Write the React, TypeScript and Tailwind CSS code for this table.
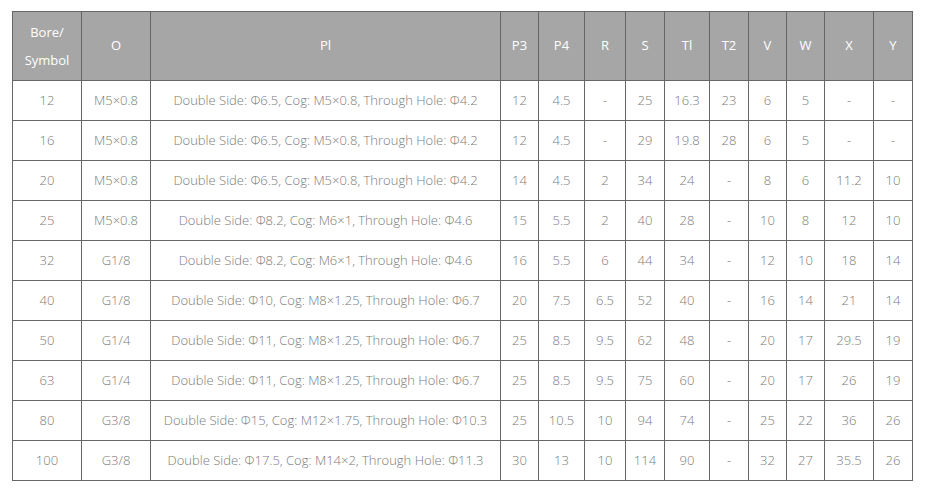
import React from "react";

const headers = ["O", "Pl", "P3", "P4", "R", "S", "Tl", "T2", "V", "W", "X", "Y"];
const widths = [69, 69, 350, 38, 46, 41, 39, 45, 39, 38, 38, 49, 39];

const rows: string[][] = [
  ["12", "M5×0.8", "Double Side: Φ6.5, Cog: M5×0.8, Through Hole: Φ4.2", "12", "4.5", "-", "25", "16.3", "23", "6", "5", "-", "-"],
  ["16", "M5×0.8", "Double Side: Φ6.5, Cog: M5×0.8, Through Hole: Φ4.2", "12", "4.5", "-", "29", "19.8", "28", "6", "5", "-", "-"],
  ["20", "M5×0.8", "Double Side: Φ6.5, Cog: M5×0.8, Through Hole: Φ4.2", "14", "4.5", "2", "34", "24", "-", "8", "6", "11.2", "10"],
  ["25", "M5×0.8", "Double Side: Φ8.2, Cog: M6×1, Through Hole: Φ4.6", "15", "5.5", "2", "40", "28", "-", "10", "8", "12", "10"],
  ["32", "G1/8", "Double Side: Φ8.2, Cog: M6×1, Through Hole: Φ4.6", "16", "5.5", "6", "44", "34", "-", "12", "10", "18", "14"],
  ["40", "G1/8", "Double Side: Φ10, Cog: M8×1.25, Through Hole: Φ6.7", "20", "7.5", "6.5", "52", "40", "-", "16", "14", "21", "14"],
  ["50", "G1/4", "Double Side: Φ11, Cog: M8×1.25, Through Hole: Φ6.7", "25", "8.5", "9.5", "62", "48", "-", "20", "17", "29.5", "19"],
  ["63", "G1/4", "Double Side: Φ11, Cog: M8×1.25, Through Hole: Φ6.7", "25", "8.5", "9.5", "75", "60", "-", "20", "17", "26", "19"],
  ["80", "G3/8", "Double Side: Φ15, Cog: M12×1.75, Through Hole: Φ10.3", "25", "10.5", "10", "94", "74", "-", "25", "22", "36", "26"],
  ["100", "G3/8", "Double Side: Φ17.5, Cog: M14×2, Through Hole: Φ11.3", "30", "13", "10", "114", "90", "-", "32", "27", "35.5", "26"],
];

export default function App() {
  return (
    <div className="w-[925px] h-[492px] bg-white pt-[11px] pl-[12px] font-['Open_Sans',sans-serif]">
      <table className="table-fixed border-collapse w-[900px] text-[13px] font-light text-[#7a7a7a] text-center">
        <colgroup>
          {widths.map((w, i) => (
            <col key={i} style={{ width: w }} />
          ))}
        </colgroup>
        <thead>
          <tr className="h-[69px] bg-[#a6a6a6] text-white">
            <th className="border border-[#666] font-normal leading-[28px]">
              Bore/
              <br />
              Symbol
            </th>
            {headers.map((h) => (
              <th key={h} className="border border-[#666] font-normal">
                {h}
              </th>
            ))}
          </tr>
        </thead>
        <tbody>
          {rows.map((r, i) => (
            <tr key={i} className="h-[40px]">
              {r.map((c, j) => (
                <td key={j} className="border border-[#666] whitespace-nowrap px-0">
                  {c}
                </td>
              ))}
            </tr>
          ))}
        </tbody>
      </table>
    </div>
  );
}
